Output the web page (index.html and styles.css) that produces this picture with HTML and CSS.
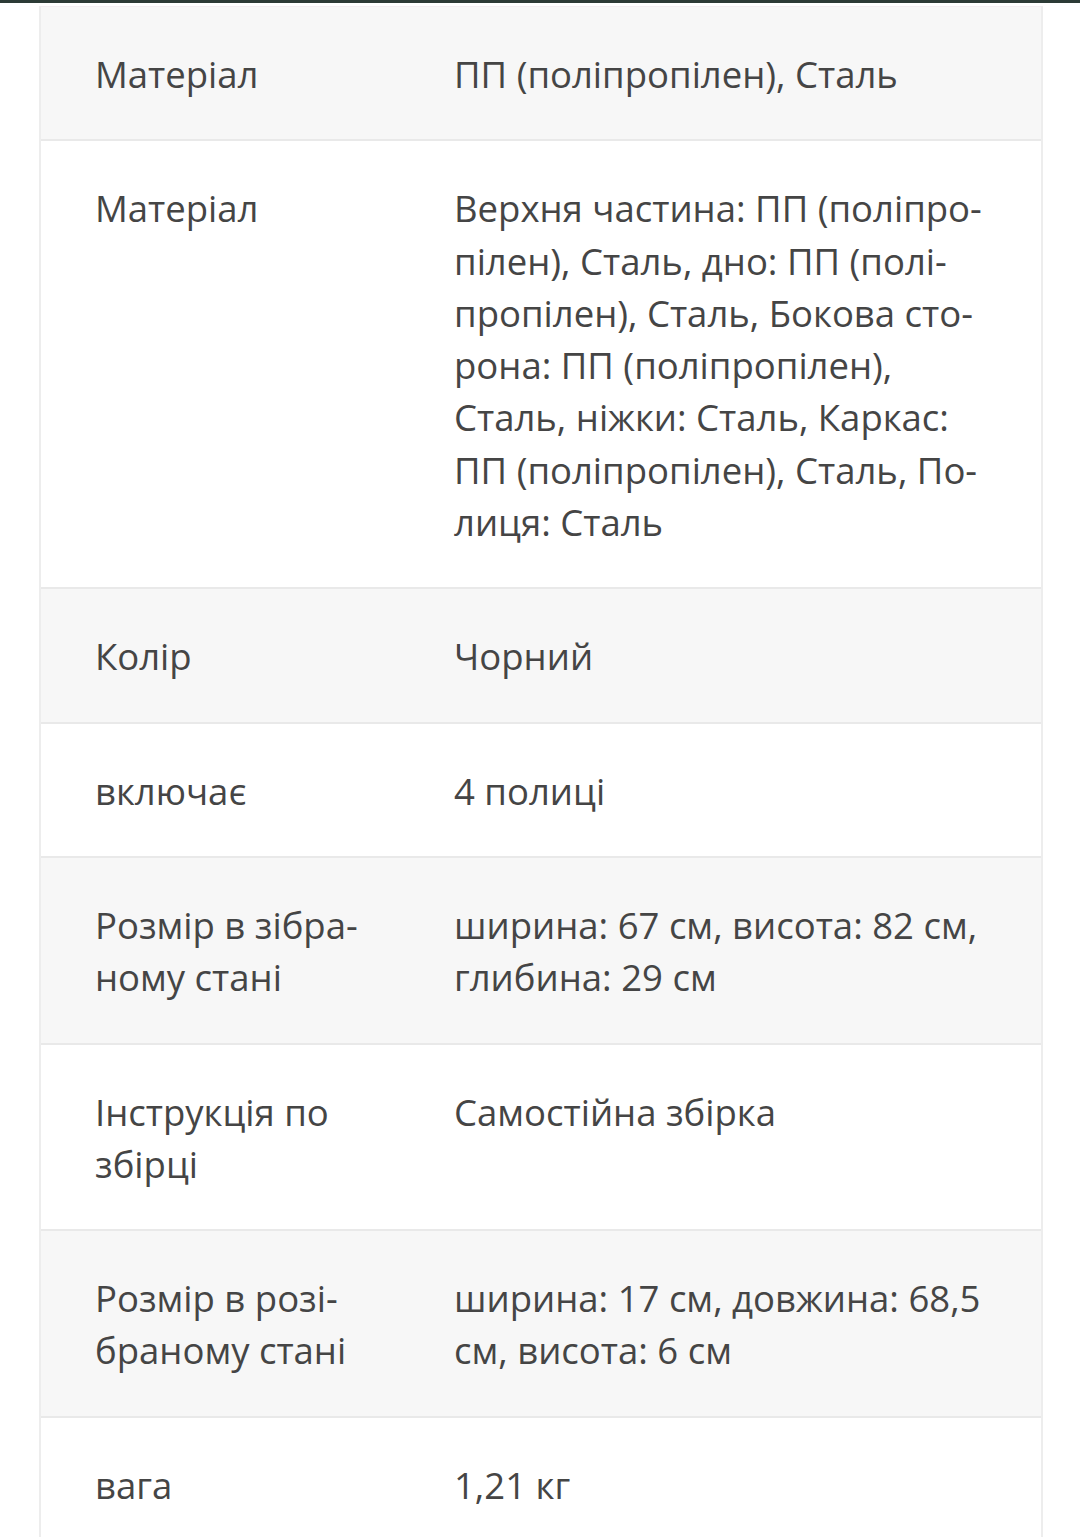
FILE: index.html
```html
<!DOCTYPE html>
<html lang="uk">
<head>
<meta charset="utf-8">
<link rel="stylesheet" href="styles.css">
</head>
<body>
<div class="topbar"></div>
<div class="specs">
  <div class="row grey"><div class="label">Матеріал</div><div class="value">ПП (поліпропілен), Сталь</div></div>
  <div class="row"><div class="label">Матеріал</div><div class="value">Верхня частина: ПП (поліпро-<br>пілен), Сталь, дно: ПП (полі-<br>пропілен), Сталь, Бокова сто-<br>рона: ПП (поліпропілен),<br>Сталь, ніжки: Сталь, Каркас:<br>ПП (поліпропілен), Сталь, По-<br>лиця: Сталь</div></div>
  <div class="row grey"><div class="label">Колір</div><div class="value">Чорний</div></div>
  <div class="row"><div class="label">включає</div><div class="value">4 полиці</div></div>
  <div class="row grey"><div class="label">Розмір в зібра-<br>ному стані</div><div class="value">ширина: 67 см, висота: 82 см,<br>глибина: 29 см</div></div>
  <div class="row"><div class="label">Інструкція по<br>збірці</div><div class="value">Самостійна збірка</div></div>
  <div class="row grey"><div class="label">Розмір в розі-<br>браному стані</div><div class="value">ширина: 17 см, довжина: 68,5<br>см, висота: 6 см</div></div>
  <div class="row"><div class="label">вага</div><div class="value">1,21 кг</div></div>
</div>
</body>
</html>
```
FILE: styles.css
```css
html, body {
  margin: 0;
  padding: 0;
  background: #ffffff;
}
body {
  font-family: "Open Sans", "Noto Sans", sans-serif;
  color: #454545;
  width: 1080px;
  height: 1537px;
  overflow: hidden;
}
.topbar {
  height: 3px;
  background: #2c3b36;
}
.specs {
  margin: 3px 0 0 39px;
  width: 1004px;
  border-left: 2px solid #ededed;
  border-right: 2px solid #ededed;
  border-top: 1px solid #f3eef2;
  box-sizing: border-box;
}
.row {
  display: grid;
  grid-template-columns: 413px 1fr;
  border-bottom: 2px solid #e9e9e9;
  font-size: 36.5px;
  line-height: 52.3px;
}
.row.grey {
  background: #f7f7f7;
}
.label {
  padding: 41px 0 39px 54px;
}
.value {
  padding: 41px 20px 39px 0;
}
```
